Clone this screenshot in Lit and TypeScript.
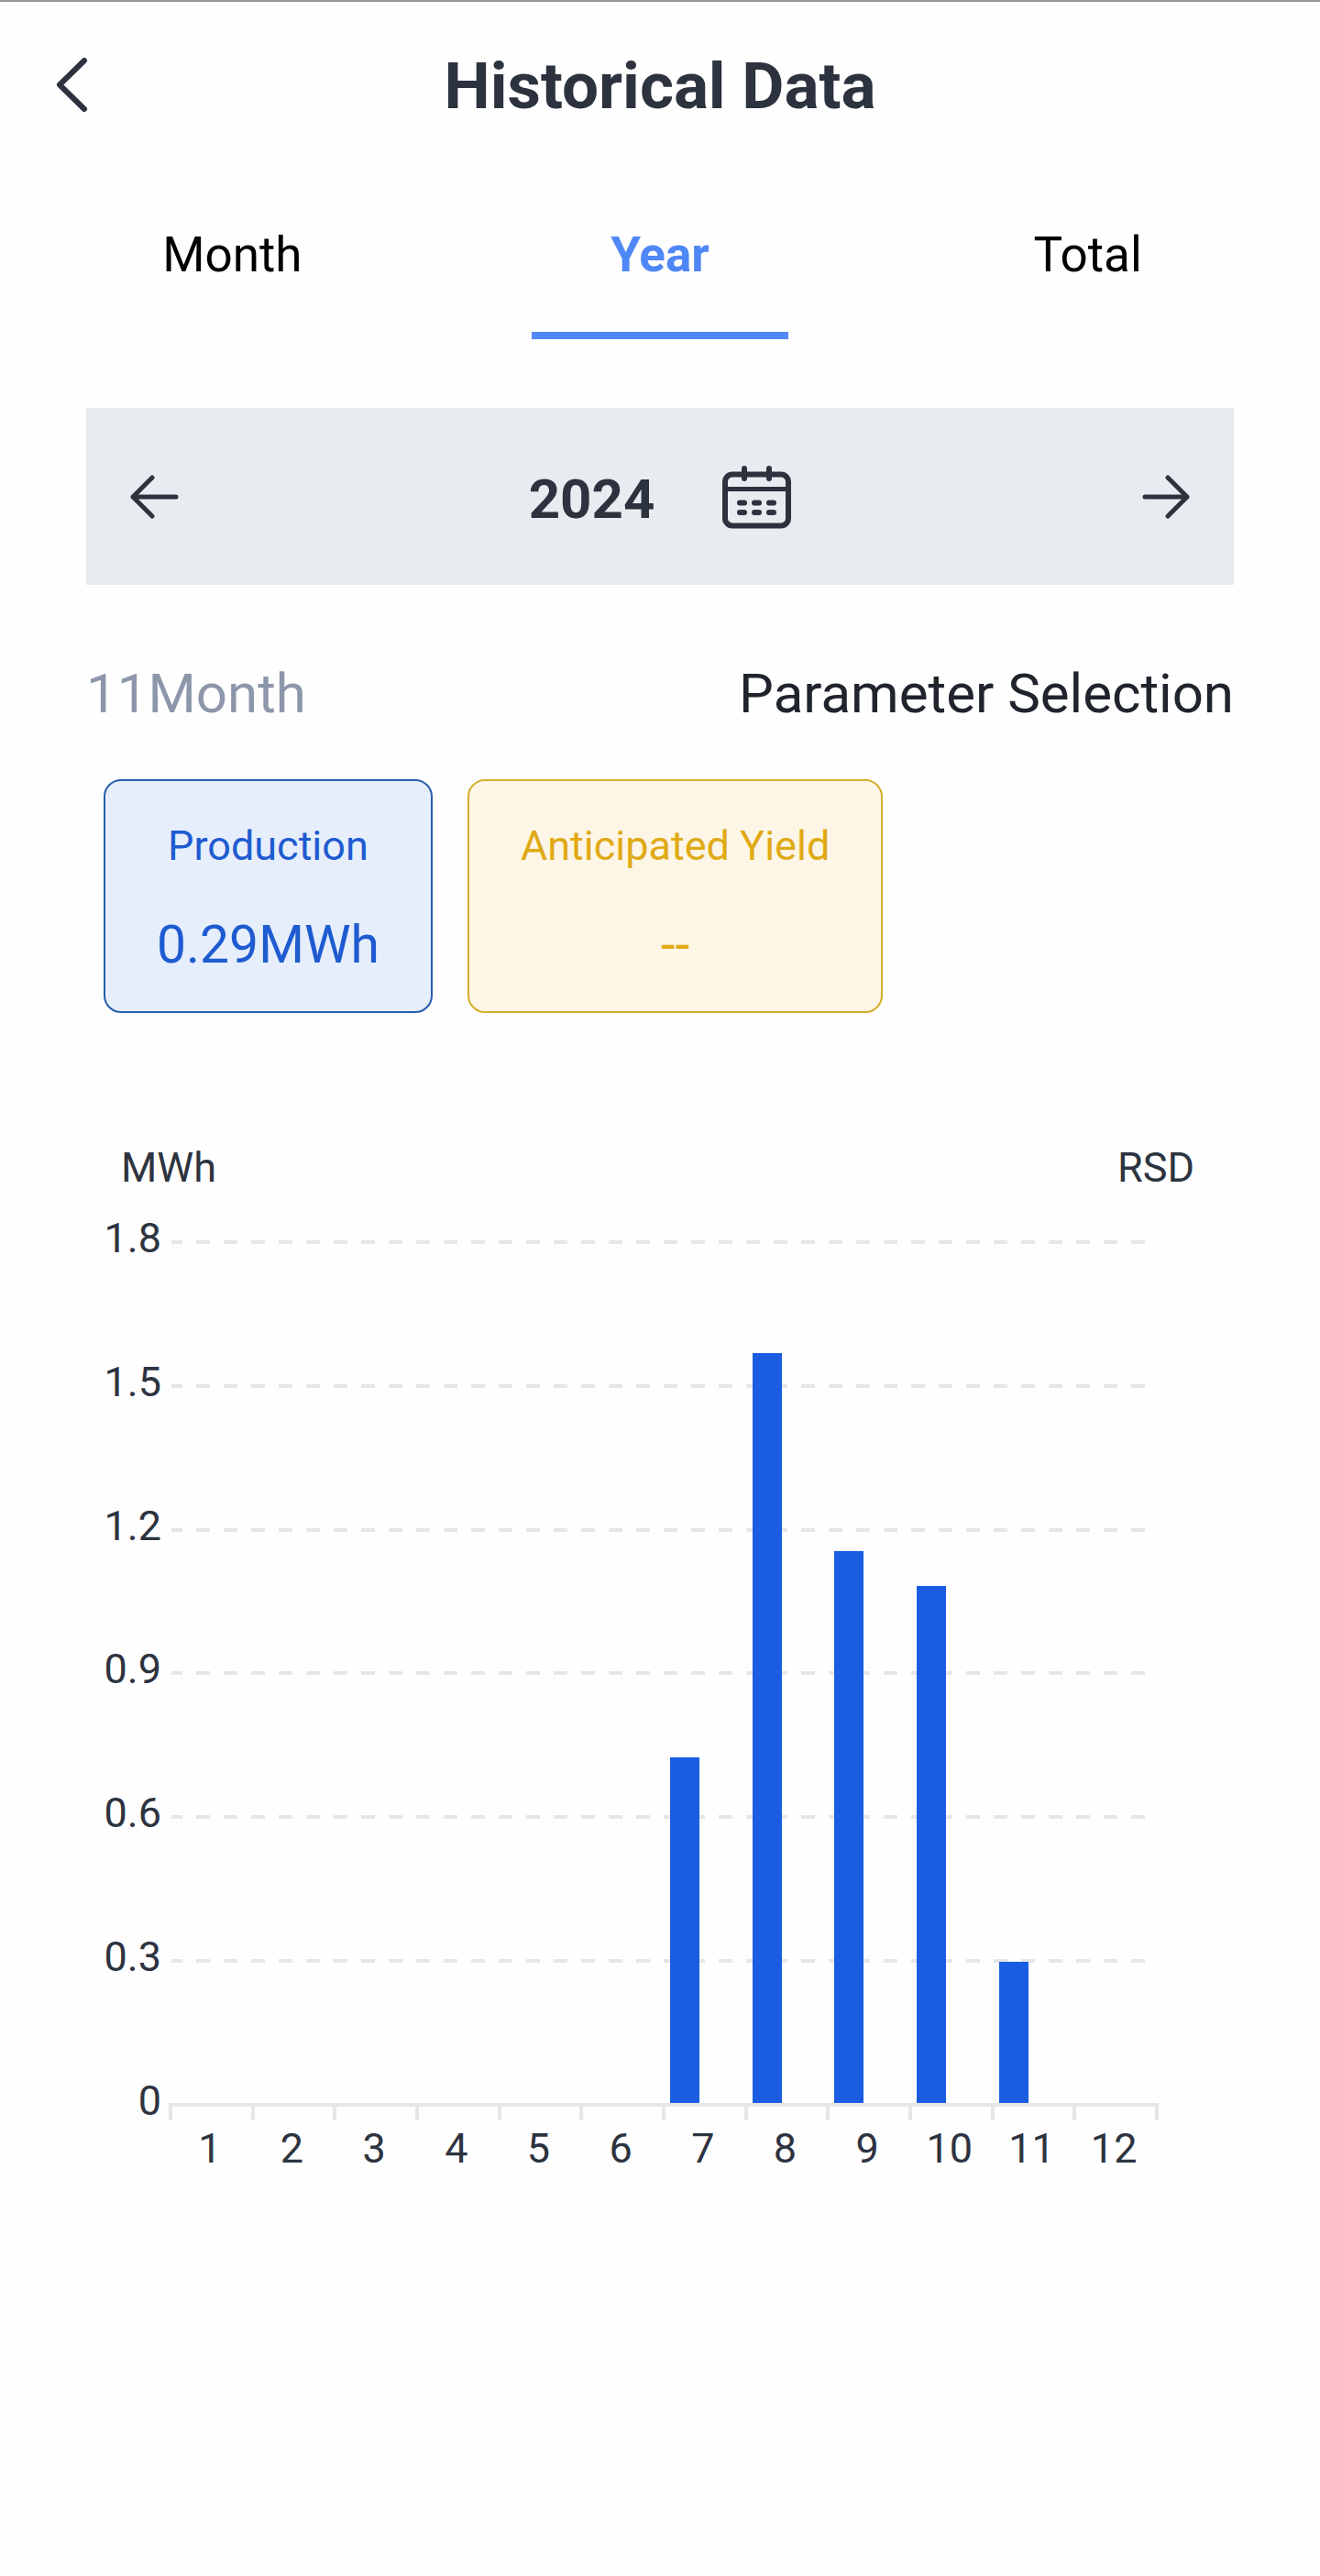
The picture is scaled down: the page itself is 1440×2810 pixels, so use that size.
import { LitElement, html, css, svg } from "lit";
import { customElement, property, state } from "lit/decorators.js";
import { classMap } from "lit/directives/class-map.js";
import { styleMap } from "lit/directives/style-map.js";

interface MonthValue {
  month: number;
  value: number;
}

const TABS = ["Month", "Year", "Total"];

const PRODUCTION: MonthValue[] = [
  { month: 1, value: 0 },
  { month: 2, value: 0 },
  { month: 3, value: 0 },
  { month: 4, value: 0 },
  { month: 5, value: 0 },
  { month: 6, value: 0 },
  { month: 7, value: 0.723 },
  { month: 8, value: 1.569 },
  { month: 9, value: 1.154 },
  { month: 10, value: 1.081 },
  { month: 11, value: 0.296 },
  { month: 12, value: 0 },
];

@customElement("yield-chart")
export class YieldChart extends LitElement {
  @property({ attribute: false }) data: MonthValue[] = [];
  @property({ type: Number }) max = 1.8;
  @property({ type: Number }) step = 0.3;

  static styles = css`
    :host {
      display: block;
      color: #2d333f;
      font-size: 45px;
    }
    .units {
      display: flex;
      justify-content: space-between;
      padding: 0 43px 0 38px;
      line-height: 52px;
    }
    .plot {
      display: grid;
      height: 993px;
      margin-top: 29px;
    }
    .scale,
    .bars {
      grid-area: 1 / 1;
    }
    .scale {
      display: flex;
      flex-direction: column;
      justify-content: space-between;
    }
    .level {
      display: flex;
      align-items: center;
      height: 52px;
      padding-right: 82px;
    }
    .value {
      width: 82px;
      margin-right: 8px;
      align-self: flex-start;
      text-align: right;
      line-height: 44px;
    }
    .line {
      flex: 1;
      height: 4px;
      margin-left: 3px;
      background: repeating-linear-gradient(
        to right,
        #e6e6e6 0 12px,
        transparent 12px 27px,
        #e6e6e6 27px 30px
      );
    }
    .line.base {
      margin-left: 0;
      background: #e6e6e6;
    }
    .bars {
      display: grid;
      grid-template-columns: repeat(12, 1fr);
      align-items: end;
      margin: 26px 84px 28px 92px;
    }
    .bar {
      width: 32px;
      margin-left: 7px;
      background: #1b5de2;
    }
    .ticks {
      display: flex;
      justify-content: space-between;
      margin: -24px 82px 0 90px;
    }
    .tick {
      width: 4px;
      height: 15px;
      background: #e6e6e6;
    }
    .months {
      display: grid;
      grid-template-columns: repeat(12, 1fr);
      margin: 5px 86px 0 90px;
      line-height: 52px;
      text-align: center;
    }
  `;

  render() {
    const count = Math.round(this.max / this.step);
    const levels = Array.from({ length: count + 1 }, (_, i) => (count - i) * this.step);
    return html`
      <div class="units"><span>MWh</span><span>RSD</span></div>
      <div class="plot">
        <div class="scale">
          ${levels.map(
            (level) => html`
              <div class="level">
                <span class="value">${level === 0 ? "0" : level.toFixed(1)}</span>
                <span class=${classMap({ line: true, base: level === 0 })}></span>
              </div>
            `
          )}
        </div>
        <div class="bars">
          ${this.data.map(
            (d) => html`<div class="bar" style=${styleMap({ height: `${(d.value / this.max) * 100}%` })}></div>`
          )}
        </div>
      </div>
      <div class="ticks">
        ${Array.from({ length: this.data.length + 1 }, () => html`<span class="tick"></span>`)}
      </div>
      <div class="months">${this.data.map((d) => html`<span>${d.month}</span>`)}</div>
    `;
  }
}

@customElement("app-root")
export class AppRoot extends LitElement {
  @state() private tab = "Year";
  @state() private year = 2024;

  static styles = css`
    :host {
      display: block;
      min-height: 100vh;
      box-sizing: border-box;
      border-top: 2px solid #999;
      background: #fefefe;
      color: #2c323e;
      font-family: Roboto, "Liberation Sans", sans-serif;
    }
    button {
      margin: 0;
      padding: 0;
      border: 0;
      background: none;
      color: inherit;
      font: inherit;
      cursor: pointer;
    }
    svg {
      display: block;
      fill: none;
      stroke: #2c323e;
      stroke-width: 5;
      stroke-linecap: round;
      stroke-linejoin: round;
    }
    .header {
      display: grid;
      grid-template-columns: 1fr auto 1fr;
      align-items: center;
      height: 184px;
      padding: 0 60px;
    }
    .back {
      justify-self: start;
    }
    .title {
      margin: 0;
      font-size: 71px;
      line-height: 84px;
      font-weight: 700;
    }
    .tabs {
      display: grid;
      grid-template-columns: repeat(3, 1fr);
      padding: 0 20px;
    }
    .tab {
      display: grid;
      grid-template-rows: 8px 1fr 8px;
      justify-items: center;
      align-items: center;
      height: 184px;
      color: #000;
      font-size: 53px;
    }
    .tab-text {
      grid-row: 2;
    }
    .tab.active {
      color: #4f87f7;
      font-weight: 700;
    }
    .tab.active::after {
      content: "";
      grid-row: 3;
      width: 60%;
      height: 8px;
      background: #4f87f7;
    }
    .content {
      padding: 75px 94px 0;
    }
    .period {
      display: flex;
      align-items: center;
      justify-content: space-between;
      height: 193px;
      padding: 0 46px;
      background: #e8ebf0;
    }
    .year {
      display: flex;
      align-items: center;
      gap: 74px;
    }
    .year-text {
      padding-top: 6px;
      font-size: 60px;
      line-height: 70px;
      font-weight: 700;
    }
    .summary {
      display: flex;
      justify-content: space-between;
      margin-top: 84px;
      font-size: 60px;
      line-height: 70px;
    }
    .month {
      color: #8d96aa;
    }
    .select {
      color: #20242c;
    }
    .cards {
      display: flex;
      gap: 38px;
      margin: 58px 0 143px 19px;
    }
    .card {
      display: flex;
      flex-direction: column;
      align-items: center;
      gap: 48px;
      padding: 44px 56px 39px;
      border: 2px solid;
      border-radius: 19px;
    }
    .card.production {
      color: #1e5bd0;
      border-color: #285cae;
      background: #e6eefc;
    }
    .card.anticipated {
      color: #dfaa14;
      border-color: #d6ae2a;
      background: #fdf5e5;
    }
    .card-label {
      font-size: 45px;
      line-height: 54px;
    }
    .card-value {
      font-size: 57px;
      line-height: 66px;
    }
  `;

  render() {
    return html`
      <header class="header">
        <button class="back" aria-label="Back">
          <svg width="38" height="62" viewBox="0 0 38 62">
            <path d="M32 3 5 29.5 32 56" stroke-width="6" />
          </svg>
        </button>
        <h1 class="title">Historical Data</h1>
      </header>
      <nav class="tabs">
        ${TABS.map(
          (name) => html`
            <button
              class=${classMap({ tab: true, active: name === this.tab })}
              @click=${() => (this.tab = name)}
            >
              <span class="tab-text">${name}</span>
            </button>
          `
        )}
      </nav>
      <main class="content">
        <div class="period">
          <button aria-label="Previous year" @click=${() => this.year--}>
            ${this.arrow("M26 3 5 24 26 45M5 24H52")}
          </button>
          <button class="year" aria-label="Choose year">
            <span class="year-text">${this.year}</span>
            <svg width="75" height="70" viewBox="0 0 75 70">
              <rect x="3" y="10.5" width="69" height="56" rx="8" stroke-width="6" />
              <path d="M3 26.5H72" stroke-linecap="butt" />
              <path d="M24 4V15M51 4V15" stroke-width="6" />
              <path d="M19 41.5h5M35 41.5h5M51 41.5h5M19 52h5M35 52h5M51 52h5" stroke-width="6" />
            </svg>
          </button>
          <button aria-label="Next year" @click=${() => this.year++}>
            ${this.arrow("M30 3 51 24 30 45M51 24H5")}
          </button>
        </div>
        <div class="summary">
          <span class="month">11Month</span>
          <button class="select">Parameter Selection</button>
        </div>
        <section class="cards">
          <div class="card production">
            <span class="card-label">Production</span>
            <span class="card-value">0.29MWh</span>
          </div>
          <div class="card anticipated">
            <span class="card-label">Anticipated Yield</span>
            <span class="card-value">--</span>
          </div>
        </section>
        <yield-chart .data=${PRODUCTION}></yield-chart>
      </main>
    `;
  }

  private arrow(path: string) {
    return html`<svg width="56" height="48" viewBox="0 0 56 48">${svg`<path d=${path} />`}</svg>`;
  }
}
